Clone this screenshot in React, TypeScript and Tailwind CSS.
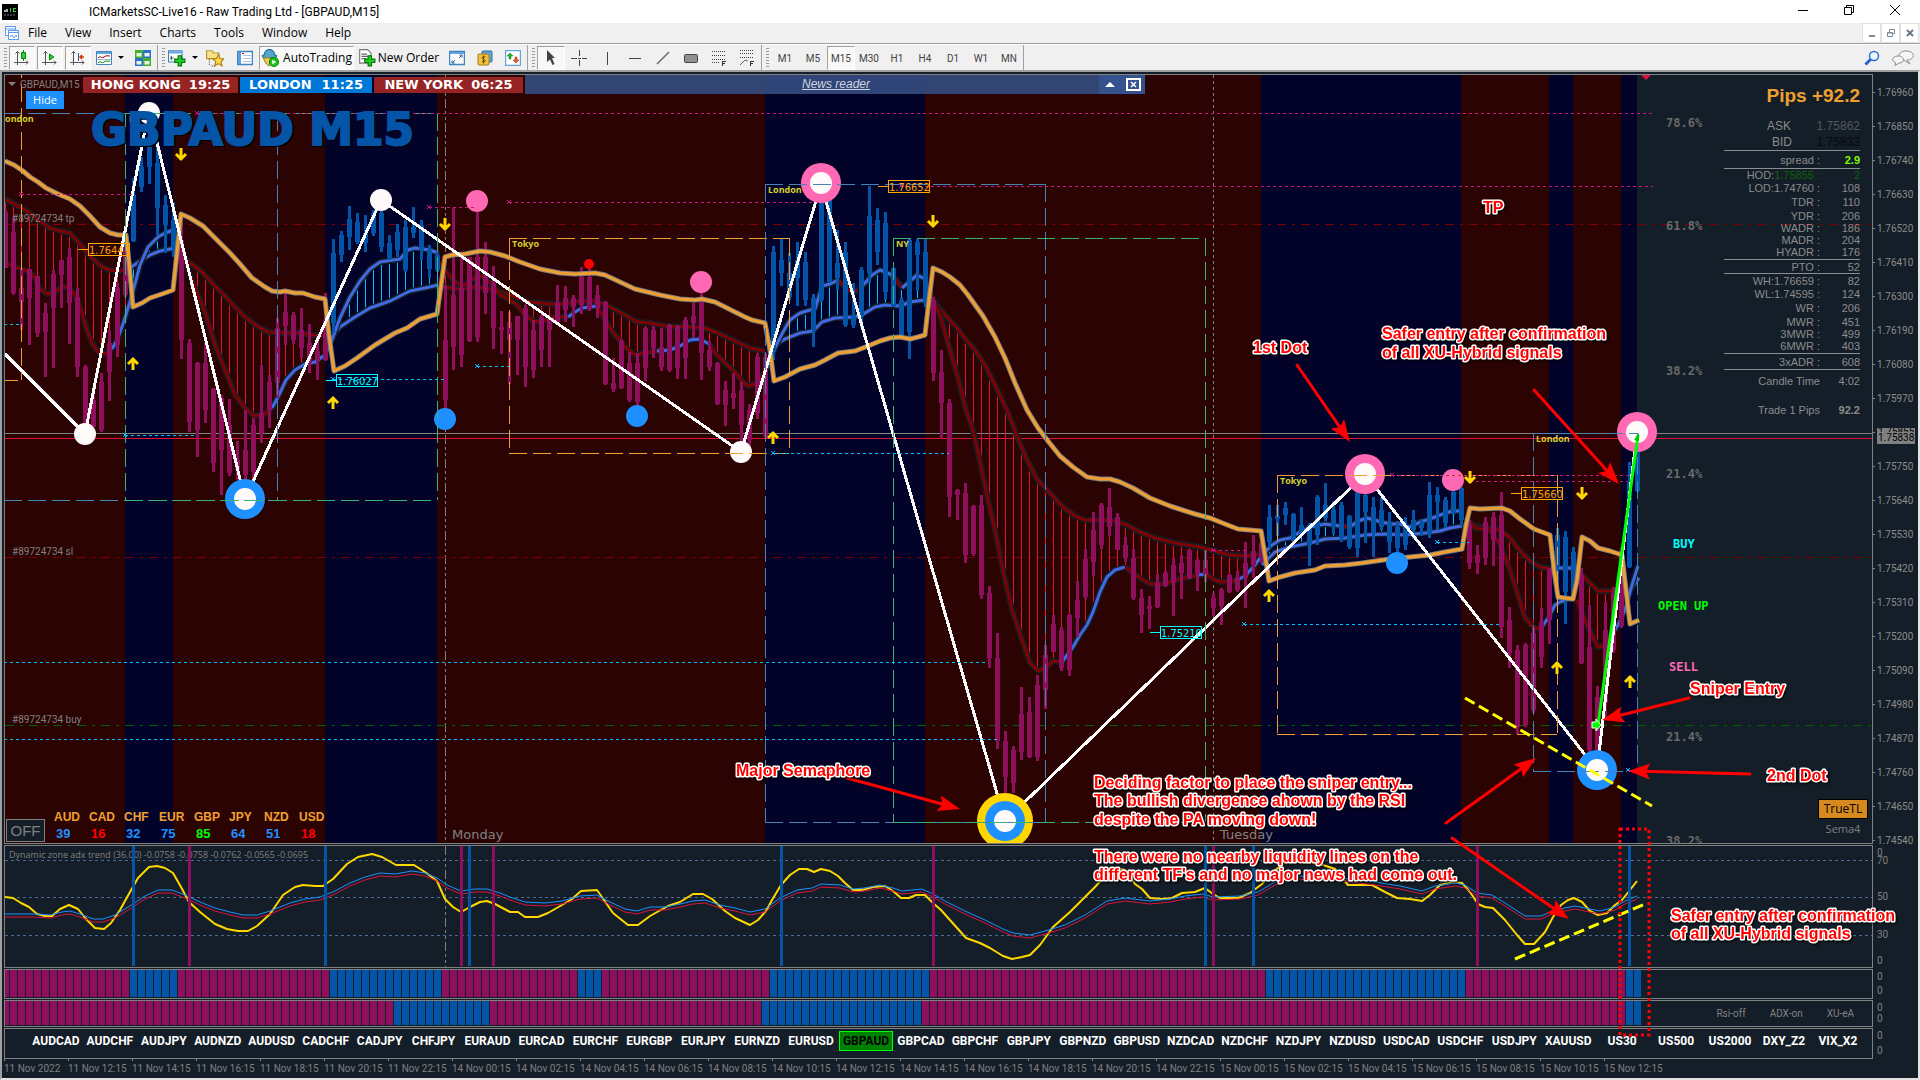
import type { ReactNode } from 'react';

type Candle = [high: number, low: number, top: number, bottom: number];
type Seg = { up: boolean; points: string };

// one entry per 15 minute bar: high, low, body top, body bottom
const candles: Candle[] = [
    [210, 268, 212, 268], [217, 295, 232, 293], [268, 330, 288, 302], [269, 345, 269, 298], [276, 337, 276, 333],
    [303, 377, 313, 332], [270, 368, 274, 308], [260, 308, 260, 275], [248, 344, 257, 303], [288, 377, 297, 367],
    [365, 425, 367, 425], [390, 427, 400, 427], [373, 432, 382, 430], [330, 401, 343, 372], [283, 357, 288, 345],
    [233, 297, 235, 295], [178, 242, 195, 241], [157, 192, 167, 187], [147, 184, 147, 167], [145, 235, 163, 208],
    [195, 253, 205, 225], [202, 257, 220, 248], [223, 359, 240, 340], [339, 432, 343, 422], [362, 457, 363, 430],
    [342, 423, 363, 410], [388, 472, 389, 463], [395, 495, 398, 450], [399, 476, 425, 473], [441, 480, 460, 470],
    [410, 490, 450, 475], [418, 483, 425, 472], [365, 443, 413, 433], [375, 428, 382, 410], [318, 398, 328, 383],
    [293, 345, 312, 326], [312, 344, 315, 340], [308, 358, 330, 348], [324, 373, 343, 363], [335, 380, 351, 360],
    [293, 361, 320, 360], [239, 333, 253, 323], [231, 262, 235, 255], [206, 250, 219, 237], [213, 244, 222, 242],
    [215, 252, 233, 243], [210, 236, 213, 233], [207, 252, 213, 247], [235, 260, 243, 258], [224, 257, 232, 250],
    [220, 272, 227, 270], [207, 238, 227, 233], [220, 260, 225, 250], [245, 278, 250, 269], [252, 272, 255, 270],
    [285, 410, 340, 400], [208, 370, 295, 347], [252, 367, 288, 355], [257, 342, 257, 341], [212, 342, 257, 337],
    [242, 314, 257, 293], [266, 349, 283, 328], [311, 354, 327, 330], [312, 384, 322, 340], [316, 375, 316, 340],
    [305, 387, 308, 367], [320, 378, 330, 370], [315, 367, 317, 350], [317, 367, 317, 330], [285, 323, 303, 322],
    [286, 322, 298, 310], [295, 327, 298, 307], [267, 314, 277, 305], [268, 311, 277, 309], [285, 318, 295, 308],
    [301, 385, 302, 384], [358, 392, 383, 389], [339, 389, 341, 388], [352, 402, 363, 400], [353, 406, 363, 402],
    [327, 381, 328, 368], [326, 358, 330, 348], [328, 371, 347, 367], [324, 372, 325, 370], [325, 379, 326, 368],
    [317, 379, 320, 358], [303, 338, 316, 323], [292, 380, 300, 353], [341, 371, 350, 367], [362, 405, 363, 404],
    [381, 426, 390, 405], [373, 409, 393, 398], [382, 442, 390, 425], [404, 447, 410, 440], [353, 419, 357, 413],
    [353, 438, 357, 436], [246, 360, 252, 352], [239, 286, 260, 273], [253, 300, 273, 297], [242, 306, 260, 278],
    [252, 306, 262, 300], [294, 347, 298, 330], [197, 302, 200, 300], [200, 283, 200, 282], [230, 290, 263, 278],
    [242, 327, 252, 325], [283, 328, 315, 325], [267, 328, 270, 317], [186, 283, 216, 273], [208, 265, 220, 252],
    [212, 300, 223, 292], [268, 307, 268, 306], [297, 337, 300, 335], [239, 359, 240, 332], [239, 291, 242, 255],
    [239, 307, 252, 303], [297, 381, 300, 373], [350, 438, 372, 403], [399, 517, 403, 497], [489, 520, 490, 495],
    [483, 563, 493, 555], [505, 556, 506, 554], [495, 599, 505, 595], [586, 668, 593, 658], [633, 749, 658, 741],
    [731, 793, 741, 777], [746, 793, 750, 783], [687, 760, 714, 752], [697, 758, 712, 757], [675, 761, 685, 757],
    [645, 709, 655, 690], [615, 652, 624, 652], [627, 671, 630, 668], [614, 676, 615, 670], [581, 637, 600, 618],
    [549, 599, 559, 597], [512, 576, 530, 562], [503, 549, 505, 545], [488, 536, 507, 527], [513, 550, 517, 550],
    [537, 562, 545, 558], [549, 600, 558, 598], [589, 633, 598, 615], [596, 629, 606, 609], [574, 608, 583, 607],
    [571, 587, 573, 586], [558, 616, 565, 583], [555, 599, 563, 573], [549, 579, 550, 578], [559, 591, 560, 573],
    [550, 582, 560, 575], [593, 616, 598, 608], [588, 625, 590, 606], [574, 593, 575, 592], [571, 592, 577, 590],
    [542, 608, 563, 578], [535, 578, 551, 565], [542, 563, 543, 558], [505, 548, 517, 542], [505, 536, 516, 519],
    [502, 525, 508, 515], [513, 543, 514, 541], [507, 535, 525, 534], [523, 566, 525, 545], [495, 545, 497, 535],
    [483, 521, 505, 518], [501, 534, 510, 527], [502, 542, 505, 538], [515, 549, 516, 547], [483, 557, 487, 548],
    [483, 543, 495, 512], [497, 557, 507, 533], [498, 530, 510, 527], [512, 553, 523, 542], [521, 559, 527, 548],
    [517, 550, 527, 545], [510, 539, 520, 530], [519, 536, 523, 528], [482, 538, 495, 533], [487, 530, 495, 502],
    [497, 528, 500, 523], [490, 515, 492, 512], [487, 526, 488, 520], [520, 569, 525, 563], [545, 574, 555, 563],
    [517, 565, 522, 558], [512, 566, 517, 540], [492, 638, 515, 627], [607, 668, 620, 653], [645, 734, 650, 727],
    [643, 727, 645, 725], [628, 713, 633, 710], [608, 668, 622, 657], [568, 644, 570, 620], [528, 600, 535, 567],
    [531, 624, 537, 592], [547, 600, 552, 597], [568, 664, 575, 663], [605, 753, 647, 750], [686, 753, 697, 750],
    [602, 720, 630, 703], [587, 653, 593, 650], [547, 628, 550, 626], [462, 568, 483, 567], [452, 492, 452, 491],
];

const inRanges = (i: number, ranges: number[][]) => ranges.some(([a, b]) => i >= a && i <= b);
const upBars = [[16, 21], [41, 54], [96, 115], [158, 182], [194, 196], [203, 204]];
const histOne = [[16, 21], [41, 54], [72, 74], [96, 115], [158, 182], [203, 204]];
const histTwo = [[49, 60], [95, 114], [203, 204]];
const bands = [[125, 173], [325, 437], [765, 925], [1261, 1461], [1549, 1573], [1621, 1637]];

const BLUE = '#0454a8';
const MAGENTA = '#8f0f5f';

const stopLine =
    '5,161 14,165 23,171 30,177 38,182 46,188 58,194 70,199 80,206 90,216 100,227 110,233 118,235 126,235 129,262 133,307 142,303 150,298 162,294 173,290 176,262 181,214 190,218 203,226 216,239 230,253 240,264 252,278 265,287 272,291 280,292 285,291 295,293 303,293 315,297 325,299 329,335 334,371 345,366 357,358 375,345 395,333 407,328 420,319 437,314 445,257 452,255 465,254 480,251 490,252 505,256 520,262 540,269 560,273 575,274 595,273 605,275 620,282 635,289 660,295 680,299 695,300 702,299 715,302 725,307 745,317 752,320 765,323 770,350 774,381 785,377 800,369 815,365 825,360 838,353 855,351 868,346 880,341 890,338 900,337 910,339 918,337 925,335 929,300 933,268 942,272 950,277 960,285 968,295 983,316 995,337 1005,358 1015,383 1027,410 1038,428 1048,441 1060,456 1073,467 1087,477 1100,479 1110,479 1120,482 1133,488 1150,498 1170,506 1195,514 1210,518 1225,524 1238,529 1261,531 1265,555 1269,581 1280,577 1295,573 1315,570 1325,566 1345,565 1362,563 1390,559 1410,557 1430,555 1445,552 1462,549 1466,525 1470,508 1480,509 1502,508 1510,511 1520,519 1534,529 1550,535 1554,570 1558,597 1565,598 1573,599 1577,580 1582,537 1590,541 1598,548 1610,551 1622,555 1626,590 1630,624 1639,620';

const slowMa: Seg[] = [
    { up: false, points: '5,199 20,207 30,213 38,220 50,228 60,231 70,233 80,244 92,258 102,267 110,270 120,271 129,269' },
    { up: true, points: '130,268 140,261 150,255 160,251 175,248' },
    { up: false, points: '179,251 190,263 202,272 213,284 225,296 235,307 245,317 257,326 268,332 285,333 300,333 320,336 327,334' },
    { up: true, points: '333,335 340,327 355,317 370,308 390,301 410,291 425,288 438,285' },
    { up: false, points: '440,287 460,289 475,287 490,289 500,292 515,297 530,302 550,304 565,304 580,301 595,301 610,307 625,315 637,322 650,323 665,326 690,327 705,328 720,334 735,341 750,348 765,351' },
    { up: true, points: '768,351 775,345 785,339 800,333 813,331 822,322 835,318 855,317 865,313 875,307 885,305 900,306 910,302 925,300' },
    { up: false, points: '931,300 935,303 945,315 957,328 967,341 975,350 985,365 995,385 1007,410 1017,436 1027,460 1037,479 1050,493 1063,507 1075,516 1085,520 1110,520 1125,524 1140,532 1155,538 1175,543 1200,547 1215,551 1230,555 1245,556 1260,555' },
    { up: true, points: '1262,565 1275,552 1290,547 1310,543 1325,539 1345,538 1365,535 1385,534 1405,535 1425,533 1440,531 1450,528 1462,526' },
    { up: false, points: '1466,522 1475,526 1490,528 1500,530 1510,538 1520,551 1530,561 1540,567 1552,569' },
    { up: true, points: '1556,568 1570,568 1577,570' },
    { up: false, points: '1579,572 1590,583 1598,591 1610,591 1620,590' },
    { up: true, points: '1624,592 1632,588 1639,578' },
];

const fastMa: Seg[] = [
    { up: false, points: '5,263 15,267 25,270 33,275 40,289 47,294 55,292 62,287 68,287 74,293 80,307 87,330 92,343 98,352 106,354 112,349' },
    { up: true, points: '112,349 118,338 125,318 132,295 140,265 148,247 158,237 165,233 176,229' },
    { up: false, points: '178,238 182,248 188,270 197,293 205,312 215,345 225,370 235,395 245,408 254,416 265,414 272,408' },
    { up: true, points: '272,408 279,395 286,380 295,370 305,364 315,362 325,355 332,340 340,318 350,297 360,281 370,269 380,262 400,259 408,250 415,248 430,250 438,253' },
    { up: false, points: '440,262 447,273 455,282 463,286 472,279 483,276 492,284 500,295 510,300 517,305 525,315 533,321 540,322 555,317 568,317' },
    { up: true, points: '568,317 575,312 582,308 597,306' },
    { up: false, points: '597,306 603,316 608,325 615,335 625,347 635,355 645,353 657,351' },
    { up: true, points: '657,351 670,350 680,346 690,340 700,339 709,344' },
    { up: false, points: '709,344 715,353 725,363 735,372 742,381 748,386 755,384 764,374' },
    { up: true, points: '766,370 775,348 783,332 790,320 800,313 810,310 815,309 822,286 830,284 838,280' },
    { up: false, points: '838,280 848,290 858,291' },
    { up: true, points: '860,288 865,283 872,275 880,270 890,274 895,278' },
    { up: false, points: '895,278 902,288' },
    { up: true, points: '902,288 910,281 917,275 925,279' },
    { up: false, points: '929,290 935,303 940,315 950,350 958,378 966,410 973,430 980,462 988,500 995,530 1003,571 1012,610 1022,640 1030,663 1038,671 1047,667 1053,661 1062,662' },
    { up: true, points: '1062,662 1073,647 1080,635 1087,625 1093,612 1100,592 1107,577 1115,570 1125,567' },
    { up: false, points: '1125,567 1133,573 1143,580 1150,584 1165,584 1175,580 1190,577 1198,575' },
    { up: true, points: '1198,575 1206,574' },
    { up: false, points: '1206,574 1213,579 1220,582 1235,581' },
    { up: true, points: '1235,581 1245,576 1255,565 1262,555 1272,545 1280,540 1290,538 1300,532 1310,527 1325,524 1340,526' },
    { up: false, points: '1340,526 1350,527' },
    { up: true, points: '1350,527 1358,521 1367,518 1378,521 1390,524 1400,524 1410,527 1420,522 1430,519 1440,515 1452,511 1462,511' },
    { up: false, points: '1466,517 1475,528 1490,530 1500,545 1510,570 1518,595 1525,618 1535,629 1542,627' },
    { up: true, points: '1542,627 1548,618 1555,605 1560,602 1573,598' },
    { up: false, points: '1577,600 1585,620 1592,635 1598,647 1605,645 1612,635' },
    { up: true, points: '1612,635 1618,625 1625,610 1632,585 1638,566' },
];

const adxYellow =
    '5,897 13,898 21,903 29,907 37,914 45,916 52,916 60,909 69,905 78,909 86,919 95,928 104,929 111,923 120,910 130,892 138,878 149,867 157,866 165,868 173,873 181,887 189,902 200,912 215,924 227,929 238,931 248,931 257,926 270,914 283,895 295,887 303,885 315,886 323,886 333,879 347,864 358,857 372,854 382,857 396,865 414,865 425,872 437,881 445,899 453,907 461,912 470,907 480,902 487,901 495,904 510,912 518,912 525,917 538,917 548,913 562,905 572,899 581,891 597,890 604,900 613,913 628,925 638,925 650,916 668,906 680,902 693,894 703,894 712,899 725,911 735,918 750,925 758,920 766,911 772,900 781,885 790,875 799,869 807,869 814,872 821,869 830,871 838,876 845,883 853,890 862,890 873,887 885,886 893,891 901,898 909,898 916,895 925,895 933,903 941,910 966,938 980,943 990,948 1003,956 1012,959 1022,957 1030,955 1040,945 1053,927 1070,912 1085,897 1095,887 1105,876 1115,868 1125,870 1135,884 1142,889 1150,898 1163,899 1172,898 1182,893 1195,892 1205,888 1213,894 1220,898 1238,898 1250,893 1262,884 1272,873 1284,863 1295,861 1305,862 1320,864 1335,869 1348,885 1372,885 1385,892 1397,898 1410,899 1422,901 1430,895 1440,885 1452,882 1462,883 1470,892 1478,904 1485,907 1493,908 1505,920 1517,935 1525,944 1534,944 1545,932 1553,917 1561,905 1568,900 1574,898 1582,902 1590,911 1598,915 1607,913 1615,905 1622,900 1630,890 1637,881';

const adxBlue =
    '5,914 35,914 50,915 62,912 70,911 80,914 93,919 103,919 115,915 133,904 145,896 158,890 172,890 185,895 200,902 215,908 230,912 243,915 257,915 270,911 290,903 305,899 320,897 335,891 350,883 365,877 380,873 395,874 412,871 425,873 437,878 447,885 461,891 475,889 487,889 500,893 510,897 525,902 545,903 562,901 580,896 597,895 610,902 625,909 637,911 650,907 665,907 680,904 693,901 705,900 720,905 735,908 750,912 765,909 780,898 797,890 812,888 821,884 840,885 853,889 865,888 880,885 893,888 902,891 922,889 933,894 945,901 965,911 985,920 1003,929 1013,933 1030,935 1045,931 1065,925 1085,915 1107,901 1125,898 1150,901 1170,899 1185,896 1203,894 1213,897 1240,896 1258,892 1275,882 1295,876 1330,877 1350,879 1375,882 1400,886 1422,891 1435,886 1455,883 1465,885 1477,893 1492,895 1505,903 1525,916 1541,916 1555,910 1575,906 1590,909 1600,911 1615,907 1625,901 1637,896';

const adxSignals: [number, boolean][] = [
    [16, true], [23, false], [40, true], [57, false], [58, true], [61, false], [97, true],
    [116, false], [150, true], [151, false], [156, true], [184, false], [203, true],
];

const toPoints = (segs: Seg[]) =>
    segs.flatMap(s => s.points.split(' ').map(p => p.split(',').map(Number)));

const valueAt = (pts: number[][], x: number) => {
    for (let i = 1; i < pts.length; i++) {
        const [x0, y0] = pts[i - 1];
        const [x1, y1] = pts[i];
        if (x <= x1) return x1 === x0 ? y1 : y0 + ((y1 - y0) * (x - x0)) / (x1 - x0);
    }
    return pts[pts.length - 1][1];
};

const slowPts = toPoints(slowMa);
const fastPts = toPoints(fastMa);
const barX = (i: number) => 5 + 8 * i;

const sessions = [
    { x: 4, y: 113, w: 273, h: 387, color: '#4682b4' },
    { x: 125, y: 113, w: 312, h: 387, color: '#3cb371' },
    { x: 0, y: 60, w: 21, h: 320, color: '#f0a030' },
    { x: 509, y: 238, w: 280, h: 215, color: '#f0a030' },
    { x: 765, y: 184, w: 280, h: 638, color: '#4682b4' },
    { x: 893, y: 238, w: 312, h: 584, color: '#3cb371' },
    { x: 1277, y: 475, w: 280, h: 259, color: '#f0a030' },
    { x: 1533, y: 433, w: 104, h: 338, color: '#4682b4' },
];

const sessionNames: [string, number, number][] = [
    ['London', 0, 122], ['N', 129, 122], ['Tokyo', 512, 247], ['London', 768, 193],
    ['NY', 896, 247], ['Tokyo', 1280, 484], ['London', 1536, 442],
];

const liquidity = [
    { x1: 197, x2: 1652, y: 113, up: true }, { x1: 21, x2: 132, y: 194, up: true }, { x1: 429, x2: 475, y: 207, up: true },
    { x1: 509, x2: 813, y: 202, up: true }, { x1: 901, x2: 1653, y: 186, up: true }, { x1: 1392, x2: 1630, y: 475, up: true },
    { x1: 1470, x2: 1628, y: 481, up: true }, { x1: 1213, x2: 1246, y: 550, up: true }, { x1: -8, x2: 20, y: 324, up: false },
    { x1: 125, x2: 194, y: 435, up: false }, { x1: 333, x2: 444, y: 379, up: false }, { x1: 477, x2: 509, y: 366, up: false },
    { x1: 773, x2: 949, y: 453, up: false }, { x1: 1437, x2: 1469, y: 542, up: false }, { x1: 1244, x2: 1501, y: 624, up: false },
    { x1: -8, x2: 987, y: 662, up: false }, { x1: -8, x2: 997, y: 739, up: false }, { x1: 1628, x2: 1634, y: 770, up: false },
];

const priceTags = [
    { x: 88, y: 243, text: '1.7644', color: '#ffa500' },
    { x: 888, y: 180, text: '1.76652', color: '#ffa500' },
    { x: 1521, y: 487, text: '1.75660', color: '#ffa500' },
    { x: 336, y: 374, text: '1.76027', color: '#00ffff' },
    { x: 1160, y: 626, text: '1.75210', color: '#00ffff' },
];

const signals: [number, number, boolean][] = [
    [181, 155, false], [133, 363, true], [333, 402, true], [445, 225, false], [773, 437, true], [933, 222, false],
    [1269, 595, true], [1470, 478, false], [1557, 667, true], [1582, 494, false], [1630, 681, true],
];

const dots: [number, number, string[]][] = [
    [85, 434, ['w']], [149, 113, ['w']], [381, 200, ['w']], [741, 452, ['w']],
    [245, 499, ['B', 'w']], [1597, 770, ['B', 'w']],
    [821, 183, ['P', 'w']], [1365, 474, ['P', 'w']], [1637, 432, ['P', 'w']],
    [477, 201, ['p']], [701, 282, ['p']], [1453, 480, ['p']],
    [445, 419, ['b']], [637, 416, ['b']], [1397, 563, ['b']],
    [1005, 821, ['Y', 'B', 'w']], [589, 264, ['r']],
];

const dotStyle: Record<string, [number, string]> = {
    w: [11, '#fffafa'], p: [11, '#ff69b4'], b: [11, '#1e90ff'], r: [5, '#ff0000'],
    P: [20, '#ff69b4'], B: [20, '#1e90ff'], Y: [28, '#ffd700'],
};

const levels: [string, number, number, string][] = [
    ['78.6%', 1666, 127, '#696969'], ['61.8%', 1666, 230, '#696969'], ['38.2%', 1666, 375, '#696969'],
    ['21.4%', 1666, 478, '#696969'], ['BUY', 1673, 548, '#00ffff'], ['OPEN UP', 1658, 610, '#00ff00'],
    ['SELL', 1669, 671, '#ff69b4'], ['21.4%', 1666, 741, '#696969'], ['38.2%', 1666, 845, '#696969'],
];

function MaLine({ segs }: { segs: Seg[] }) {
    return (
        <g fill="none" strokeLinejoin="round">
            {segs.map((s, i) => <polyline key={`h${i}`} points={s.points} stroke="#141e28" strokeWidth="6" />)}
            {segs.map((s, i) => <polyline key={i} points={s.points} stroke={s.up ? '#4169e1' : '#800000'} strokeWidth="3" />)}
        </g>
    );
}

function PriceChart() {
    return (
        <svg viewBox="5 75 1867 768" className="block w-full h-auto" role="img" aria-label="GBPAUD M15 chart">
            <rect x="5" y="75" width="1632" height="768" fill="#2b0303" />
            {bands.map(([a, b]) => <rect key={a} x={a} y="75" width={b - a} height="768" fill="#030329" />)}

            <g shapeRendering="crispEdges" strokeWidth="1">
                <g stroke="#808080">
                    <line x1="445.5" x2="445.5" y1="75" y2="843" strokeDasharray="9 3 3 3 3 3" />
                    <line x1="1213.5" x2="1213.5" y1="75" y2="843" strokeDasharray="3 3" />
                </g>
                <g stroke="#800000" strokeDasharray="9 6 3 6">
                    <line x1="5" x2="1873" y1="224.5" y2="224.5" />
                    <line x1="5" x2="1873" y1="557.5" y2="557.5" />
                </g>
                <line x1="5" x2="1873" y1="725.5" y2="725.5" stroke="#006400" strokeDasharray="9 6 3 6" />
                <line x1="5" x2="1873" y1="433.5" y2="433.5" stroke="#808080" />
                <line x1="5" x2="1873" y1="438.5" y2="438.5" stroke="#dc143c" />
            </g>

            <g shapeRendering="crispEdges">
                {candles.map((_, i) => {
                    const a = valueAt(slowPts, barX(i));
                    const b = valueAt(fastPts, barX(i));
                    if (Math.abs(a - b) < 8) return null;
                    return (
                        <rect key={i} x={barX(i)} y={Math.min(a, b) + 3} width="1" height={Math.abs(a - b) - 5}
                            fill={inRanges(i, upBars) ? '#00bfff' : '#dc143c'} />
                    );
                })}
            </g>
            <MaLine segs={slowMa} />
            <MaLine segs={fastMa} />

            <g shapeRendering="crispEdges">
                {candles.map(([high, low, top, bottom], i) => (
                    <g key={i} fill={inRanges(i, upBars) ? BLUE : MAGENTA}>
                        <rect x={barX(i) - 1} y={high} width="3" height={low - high} />
                        <rect x={barX(i) - 2} y={top} width="5" height={bottom - top} />
                    </g>
                ))}
            </g>

            <g fill="none" strokeLinejoin="round">
                <polyline points={stopLine} stroke="#808080" strokeWidth="5" />
                <polyline points={stopLine} stroke="#f0a030" strokeWidth="3" />
            </g>

            <polyline fill="none" stroke="#fff" strokeWidth="3" shapeRendering="crispEdges"
                points="5,354 85,434 149,110 245,499 381,200 741,452 821,184 1005,821 1365,474 1597,770 1637,432" />
            {dots.map(([x, y, rings]) => rings.map(r => (
                <circle key={`${x}${r}`} cx={x} cy={y} r={dotStyle[r][0]} fill={dotStyle[r][1]} />
            )))}

            <g fill="none" shapeRendering="crispEdges" strokeDasharray="18 6">
                {sessions.map(s => (
                    <g key={s.x} stroke={s.color}>
                        <path d={`M${s.x} ${s.y + 0.5}h${s.w}M${s.x} ${s.y + s.h + 0.5}h${s.w}`} />
                        <path d={`M${s.x + 0.5} ${s.y}v${s.h}M${s.x + s.w + 0.5} ${s.y}v${s.h}`} />
                    </g>
                ))}
            </g>
            <g fontFamily="Open Sans, sans-serif" fontSize="9" fontWeight="bold" fill="#d4d02c">
                {sessionNames.map(([name, x, y]) => <text key={x} x={x} y={y}>{name}</text>)}
            </g>

            {liquidity.map(l => (
                <g key={`${l.x1}-${l.y}`} stroke={l.up ? '#c71585' : '#00bfff'} fill="none">
                    <line x1={l.x1} x2={l.x2} y1={l.y + 0.5} y2={l.y + 0.5} strokeDasharray="3 3" shapeRendering="crispEdges" />
                    <path d={`M${l.x1 - 2} ${l.y - 2}l4 4m0 -4l-4 4`} />
                </g>
            ))}

            <g fontFamily="DejaVu Sans Condensed, sans-serif" fontSize="11">
                {priceTags.map(t => (
                    <g key={t.text}>
                        <path d={`M${t.x - 10} ${t.y + 6.5}h10`} stroke={t.color} />
                        <rect x={t.x + 0.5} y={t.y + 0.5} width="41" height="12" fill="none" stroke={t.color} />
                        <text x={t.x + 1} y={t.y + 11} fill={t.color}>{t.text}</text>
                    </g>
                ))}
            </g>

            {signals.map(([x, y, up]) => (
                <path key={x} fill="none" stroke="#ffd700" strokeWidth="3"
                    d={up ? `M${x} ${y + 7}v-12m-5 6l5 -5l5 5` : `M${x} ${y - 7}v12m-5 -6l5 5l5 -5`} />
            ))}

            <line x1="1598" y1="725" x2="1638" y2="435" stroke="#00ff00" strokeWidth="3" />
            <path d="M1592 722h4v-3l5 6l-5 6v-3h-4z" fill="#00ff00" stroke="#fff" />
            <path d="M1634 440l5 -7v8z" fill="#00c800" />
            <path d="M1641 75h10l-5 5z" fill="#dc143c" />

            <g fontFamily="DejaVu Sans Mono, monospace" fontSize="12" fontWeight="bold">
                {levels.map(([text, x, y, fill]) => <text key={y} x={x} y={y} fill={fill}>{text}</text>)}
            </g>
            <g fontFamily="Roboto, sans-serif" fontSize="10" fill="#808080">
                <text x="12" y="222">#89724734 tp</text>
                <text x="12" y="555">#89724734 sl</text>
                <text x="12" y="723">#89724734 buy</text>
            </g>
            <g fontFamily="DejaVu Sans, sans-serif" fontSize="13" fill="#808080">
                <text x="452" y="839">Monday</text>
                <text x="1220" y="839">Tuesday</text>
            </g>
            <g fontFamily="DejaVu Sans, sans-serif" fontSize="44" fontWeight="bold" strokeWidth="2">
                <text x="92" y="146" fill="#000" stroke="#000">GBPAUD M15</text>
                <text x="91" y="145" fill="#0454a8" stroke="#0454a8">GBPAUD M15</text>
            </g>
        </svg>
    );
}

function AdxPanel() {
    return (
        <svg viewBox="5 846 1867 121" className="block w-full h-auto" role="img" aria-label="Dynamic zone adx trend">
            <g shapeRendering="crispEdges" stroke="#4a6a90" strokeDasharray="3 3">
                <line x1="5" x2="1873" y1="860.5" y2="860.5" />
                <line x1="5" x2="1873" y1="897.5" y2="897.5" />
                <line x1="5" x2="1873" y1="935.5" y2="935.5" />
            </g>
            <line x1="445.5" x2="445.5" y1="846" y2="967" stroke="#808080" strokeDasharray="9 3 3 3 3 3" />
            <text x="9" y="858" fontFamily="Open Sans, sans-serif" fontSize="9" fill="#808080">
                Dynamic zone adx trend (36.00) -0.0758 -0.0758 -0.0762 -0.0565 -0.0695
            </text>
            <g fill="none" strokeLinejoin="round">
                <polyline points={adxYellow} stroke="#ffd700" strokeWidth="2" />
                <polyline points={adxBlue} stroke="#dc143c" transform="translate(0 3)" />
                <polyline points={adxBlue} stroke="#1e90ff" />
            </g>
            {adxSignals.map(([i, up]) => (
                <rect key={i} x={barX(i) - 1} y="846" width="3" height="120" fill={up ? BLUE : MAGENTA} />
            ))}
        </svg>
    );
}

function Histogram({ top, height, ranges }: { top: number; height: number; ranges: number[][] }) {
    return (
        <svg viewBox={`5 ${top} 1867 ${height}`} className="block w-full h-auto" role="img" aria-label="Trend histogram">
            {candles.map((_, i) => (
                <rect key={i} x={barX(i) - 3} y={top} width="7" height={height - 1} fill={inRanges(i, ranges) ? BLUE : MAGENTA} />
            ))}
        </svg>
    );
}

const stats: { label: string; value: string; row: string; mid?: string }[] = [
    { label: 'spread :', value: '2.9', row: 'h-[18px] border-t border-[#8a8f94]' },
    { label: 'HOD:', mid: '1.75855 :', value: '2', row: 'h-[13px] border-t border-[#8a8f94]' },
    { label: 'LOD:1.74760 :', value: '108', row: 'h-3' },
    { label: 'TDR :', value: '110', row: 'h-4' },
    { label: 'YDR :', value: '206', row: 'h-3' },
    { label: 'WADR :', value: '186', row: 'h-3' },
    { label: 'MADR :', value: '204', row: 'h-3' },
    { label: 'HYADR :', value: '176', row: 'h-[14px]' },
    { label: 'PTO :', value: '52', row: 'h-[14px] border-t border-[#8a8f94]' },
    { label: 'WH:1.76659 :', value: '82', row: 'h-[14px] border-t border-[#8a8f94]' },
    { label: 'WL:1.74595 :', value: '124', row: 'h-3' },
    { label: 'WR :', value: '206', row: 'h-4' },
    { label: 'MWR :', value: '451', row: 'h-3' },
    { label: '3MWR :', value: '499', row: 'h-3' },
    { label: '6MWR :', value: '403', row: 'h-[14px]' },
    { label: '3xADR :', value: '608', row: 'h-4 border-t border-[#8a8f94]' },
    { label: 'Candle Time', value: '4:02', row: 'h-[22px] border-t border-[#8a8f94]' },
    { label: 'Trade 1 Pips', value: '92.2', row: 'h-9' },
];

function StatsPanel() {
    return (
        <div className="absolute top-[7px] right-3 flex flex-col items-end font-['Liberation_Sans',sans-serif] text-[#8c8c8c]">
            <p className="text-[19px] leading-7 font-bold text-[#f0a030]">Pips +92.2</p>
            <div className="mt-2 w-34">
                <div className="flex h-4 justify-between pl-[43px] text-xs leading-4">
                    <span>ASK</span><span className="text-[#55595e]">1.75862</span>
                </div>
                <div className="flex h-4 justify-between pl-12 text-xs leading-4">
                    <span>BID</span><span className="text-[#05080b]">1.75833</span>
                </div>
                <table className="w-full border-collapse text-[11px] leading-3">
                    <tbody>
                        {stats.map(s => (
                            <tr key={s.label} className={s.row}>
                                <th scope="row" className="p-0 pr-1 text-right align-middle font-normal">
                                    {s.label}{s.mid && <span className="text-[#0a640a]">{s.mid}</span>}
                                </th>
                                <td className={`w-9 p-0 text-right align-middle ${s.label === 'spread :' ? 'font-bold text-[#7cfc00]' : s.mid ? 'text-[#0a640a]' : ''} ${s.value === '92.2' ? 'font-bold' : ''}`}>
                                    {s.value}
                                </td>
                            </tr>
                        ))}
                    </tbody>
                </table>
            </div>
        </div>
    );
}

const strength = [
    ['AUD', '39', 'text-[#1e90ff]'], ['CAD', '16', 'text-[#ff0000]'], ['CHF', '32', 'text-[#1e90ff]'], ['EUR', '75', 'text-[#1e90ff]'],
    ['GBP', '85', 'text-[#00ff00]'], ['JPY', '64', 'text-[#1e90ff]'], ['NZD', '51', 'text-[#1e90ff]'], ['USD', '18', 'text-[#ff0000]'],
];

function ChartOverlays() {
    return (
        <>
            <div className="absolute top-0 left-0 flex h-[19px] items-center font-['DejaVu_Sans',sans-serif] text-[13px] font-bold text-white">
                <div className="flex w-[78px] items-center gap-1 pl-[3px] font-['Roboto',sans-serif] text-[10px] font-normal text-[#808080]">
                    <svg viewBox="0 0 8 5" className="w-2 shrink-0" fill="#808080"><path d="M0 0h8l-4 4z" /></svg>
                    GBPAUD,M15
                </div>
                <div className="mr-0.5 flex h-4 w-[155px] items-center justify-center gap-2 bg-[#962424]"><span>HONG KONG</span><span>19:25</span></div>
                <div className="mr-0.5 flex h-4 w-[132px] items-center justify-center gap-2.5 bg-[#0078d7]"><span>LONDON</span><span>11:25</span></div>
                <div className="mr-0.5 flex h-4 w-[149px] items-center justify-center gap-2 bg-[#962424]"><span>NEW YORK</span><span>06:25</span></div>
                <div className="flex h-full w-[620px] items-stretch bg-[#344c80]/90">
                    <a href="#news" className="flex-1 pt-px text-center font-['Liberation_Sans',sans-serif] text-xs font-normal text-[#d0d4e0] italic underline">
                        <span className="ml-12">News reader</span>
                    </a>
                    <button aria-label="Collapse news" className="flex w-[22px] items-center justify-center bg-[#34528c]">
                        <svg viewBox="0 0 10 5" className="w-2.5" fill="#fff"><path d="M0 5l5 -5l5 5z" /></svg>
                    </button>
                    <button aria-label="Close news" className="flex w-6 items-center justify-center bg-[#34528c]">
                        <svg viewBox="0 0 15 13" className="w-[15px]" fill="none" stroke="#fff">
                            <path d="M1 1h13v11H1z" strokeWidth="2" /><path d="M5 4l5 5M10 4l-5 5" strokeWidth="1.5" />
                        </svg>
                    </button>
                </div>
            </div>
            <button className="absolute top-4 left-[21px] h-[18px] w-[38px] bg-[#1e90ff] font-['Open_Sans',sans-serif] text-[11px] leading-4 text-white">Hide</button>
            <StatsPanel />
            <div className="absolute bottom-0 left-0 flex items-end font-['Liberation_Sans',sans-serif]">
                <button className="m-px mr-[9px] h-[23px] w-[39px] border border-[#808080] bg-[#141e28] text-[15px] leading-5 text-[#808080]">OFF</button>
                {strength.map(([name, value, color]) => (
                    <div key={name} className="w-[35px] font-bold">
                        <p className="text-xs leading-4 text-[#f0a030]">{name}</p>
                        <p className={`pl-0.5 text-[13px] leading-[18px] ${color}`}>{value}</p>
                    </div>
                ))}
            </div>
            <div className="absolute right-1 bottom-1.5 flex flex-col items-center gap-0.5 font-['Open_Sans',sans-serif] text-[#808080]">
                <button className="h-5 w-[50px] border border-black bg-[#d68a1e] text-xs leading-4 text-black">TrueTL</button>
                <button className="text-[11px] leading-4">Sema4</button>
            </div>
        </>
    );
}

const prices = Array.from({ length: 23 }, (_, i) => ((176960 - i * 110) / 100000).toFixed(5));

function PriceAxis() {
    return (
        <div className="relative w-[45px] shrink-0 overflow-hidden font-['Roboto',sans-serif] text-[10px] text-[#8c8c8c]">
            <div className="absolute inset-x-0 top-px">
                {prices.map(p => (
                    <div key={p} className="flex h-[34px] items-center gap-0.5">
                        <span className="h-px w-0.5 bg-[#808080]" />
                        {p === '1.75860' ? (
                            <div className="mt-2 h-4 overflow-hidden bg-[#808080] px-px text-black">
                                <p className="h-1 overflow-hidden leading-2">1.75855</p>
                                <p className="leading-3">1.75838</p>
                            </div>
                        ) : <span>{p}</span>}
                    </div>
                ))}
            </div>
        </div>
    );
}

function Panel({ children, axis }: { children: ReactNode; axis?: ReactNode }) {
    return (
        <div className="flex">
            <div className="relative min-w-0 flex-1 overflow-hidden border border-[#808080]">{children}</div>
            {axis ?? (
                <div className="flex w-[45px] shrink-0 flex-col justify-between py-1 pl-1 font-['Roboto',sans-serif] text-[10px] leading-2 text-[#808080]">
                    <span>0</span><span>0</span>
                </div>
            )}
        </div>
    );
}

const symbols = [
    'AUDCAD', 'AUDCHF', 'AUDJPY', 'AUDNZD', 'AUDUSD', 'CADCHF', 'CADJPY', 'CHFJPY', 'EURAUD', 'EURCAD', 'EURCHF', 'EURGBP',
    'EURJPY', 'EURNZD', 'EURUSD', 'GBPAUD', 'GBPCAD', 'GBPCHF', 'GBPJPY', 'GBPNZD', 'GBPUSD', 'NZDCAD', 'NZDCHF', 'NZDJPY',
    'NZDUSD', 'USDCAD', 'USDCHF', 'USDJPY', 'XAUUSD', 'US30', 'US500', 'US2000', 'DXY_Z2', 'VIX_X2',
];

const times = [
    '11 Nov 2022', '11 Nov 12:15', '11 Nov 14:15', '11 Nov 16:15', '11 Nov 18:15', '11 Nov 20:15', '11 Nov 22:15',
    '14 Nov 00:15', '14 Nov 02:15', '14 Nov 04:15', '14 Nov 06:15', '14 Nov 08:15', '14 Nov 10:15', '14 Nov 12:15',
    '14 Nov 14:15', '14 Nov 16:15', '14 Nov 18:15', '14 Nov 20:15', '14 Nov 22:15', '15 Nov 00:15', '15 Nov 02:15',
    '15 Nov 04:15', '15 Nov 06:15', '15 Nov 08:15', '15 Nov 10:15', '15 Nov 12:15',
];

const notes: [string, number, number][] = [
    ['TP', 1483, 213], ['1st Dot', 1253, 353], ['Safer entry after confirmation', 1382, 339], ['of all XU-Hybrid signals', 1382, 358],
    ['Major Semaphore', 736, 776], ['Deciding factor to place the sniper entry...', 1094, 788],
    ['The bullish divergence ahown by the RSI', 1094, 806], ["despite the PA moving down!", 1094, 825],
    ['There were no nearby liquidity lines on the', 1094, 862], ["different TF's and no major news had come out.", 1094, 880],
    ['Sniper Entry', 1690, 694], ['2nd Dot', 1767, 781],
    ['Safer entry after confirmation', 1671, 921], ['of all XU-Hybrid signals', 1671, 939],
];

const arrows = [
    [1297, 365, 1350, 442], [1534, 390, 1619, 484], [847, 778, 960, 809], [1689, 698, 1602, 720],
    [1750, 774, 1628, 771], [1446, 823, 1536, 758], [1452, 838, 1569, 919],
];

function Annotations() {
    return (
        <svg viewBox="4 74 1914 1004" className="pointer-events-none absolute inset-x-0 top-0 w-full">
            <g stroke="#ffff00" strokeWidth="3" strokeDasharray="11 5">
                <line x1="1465" y1="698" x2="1652" y2="806" />
                <line x1="1515" y1="959" x2="1645" y2="904" />
            </g>
            <rect x="1620" y="829" width="29" height="206" fill="none" stroke="#ff0000" strokeWidth="3" strokeDasharray="3 3" />
            {arrows.map(([x1, y1, x2, y2]) => {
                const length = Math.hypot(x2 - x1, y2 - y1);
                const angle = (Math.atan2(y2 - y1, x2 - x1) * 180) / Math.PI;
                return (
                    <g key={x1} transform={`translate(${x1} ${y1}) rotate(${angle})`} fill="#ff0000">
                        <path d={`M0 0H${length - 14}`} stroke="#ff0000" strokeWidth="3" strokeLinecap="round" />
                        <path d={`M${length} 0l-22 -8l4 8l-4 8z`} />
                    </g>
                );
            })}
            <g fontFamily="Liberation Sans, sans-serif" fontSize="16" fontWeight="bold" fill="#ff0000"
                stroke="#fff" strokeWidth="3" strokeLinejoin="round" paintOrder="stroke" className="drop-shadow-[1px_1px_1px_#000]">
                {notes.map(([text, x, y]) => <text key={`${x}-${y}`} x={x} y={y}>{text}</text>)}
            </g>
        </svg>
    );
}

const Grip = () => <span className="mr-0.5 ml-1 h-5 w-[3px] bg-[repeating-linear-gradient(#999_0_1px,#f0f0f0_1px_3px)]" />;
const Divider = () => <span className="h-[25px] w-px bg-[#a0a0a0]" />;
const Caret = () => <svg viewBox="0 0 6 3" className="w-1.5" fill="#000"><path d="M0 0h6l-3 3z" /></svg>;

function Tool({ label, pressed, width = 'w-7', children }: { label: string; pressed?: boolean; width?: string; children: ReactNode }) {
    return (
        <button aria-label={label} className={`flex h-6 ${width} shrink-0 items-center justify-center gap-1.5 ${pressed ? 'border border-[#a0a0a0] border-r-white border-b-white bg-[#f8f8f8]' : ''}`}>
            {children}
        </button>
    );
}

function Icon({ children, size = 'w-4' }: { children: ReactNode; size?: string }) {
    return <svg viewBox="0 0 16 16" className={`${size} shrink-0`} fill="none">{children}</svg>;
}

const axes = <path d="M3.5 1v14M0 12.5h14M1.5 3.5l2 -2l2 2M12 10.5l2 2l-2 2" stroke="#555" />;

function Toolbar() {
    return (
        <div className="flex h-[26px] items-center border-t border-white bg-[#f0f0f0] font-['Open_Sans',sans-serif] text-xs text-black">
            <Grip />
            <div className="flex gap-0.5">
                <Tool label="Candlesticks" pressed width="w-[26px]"><Icon>{axes}<path d="M9.5 0v11" stroke="#080" /><path d="M7.5 2.5h4v6h-4z" fill="#2ecc40" stroke="#080" /></Icon></Tool>
                <Tool label="Auto scroll" pressed width="w-[26px]"><Icon>{axes}<path d="M7.5 4v6l4.5 -3z" fill="#2ecc40" stroke="#080" /></Icon></Tool>
                <Tool label="Chart shift" pressed width="w-[26px]"><Icon>{axes}<path d="M8.5 3v8" stroke="#1c5f8f" /><path d="M14 7H10M12 5L10 7l2 2" stroke="#d33a00" strokeWidth="1.5" /></Icon></Tool>
            </div>
            <Tool label="Indicators" width="w-[38px]">
                <Icon><path d="M.5 1.5h15v13H.5z" fill="#fff" stroke="#3f83c0" /><path d="M1 2h14v2H1z" fill="#5fa4df" /><path d="M2 8c3 -3 3 1 6 -1s3 -1 6 -1" stroke="#900" /><path d="M1 9.5h14" stroke="#9bc" /><path d="M2 13c3 -3 4 1 6 -1s3 0 6 -1" stroke="#080" /></Icon>
                <Caret />
            </Tool>
            <Tool label="Tile windows">
                <Icon><path d="M0 0h8v8H0z" fill="#46b02c" /><path d="M8 0h8v8H8z" fill="#2b6fd0" /><path d="M0 8h8v8H0z" fill="#2b6fd0" /><path d="M8 8h8v8H8z" fill="#46b02c" /><path d="M1.5 3h5v3.5h-5zM9.5 3h5v3.5h-5zM1.5 11h5v3.5h-5zM9.5 11h5v3.5h-5z" fill="#e8f4e8" /></Icon>
            </Tool>
            <Divider />
            <Grip />
            <Tool label="New chart" width="w-8">
                <Icon size="w-[18px]"><path d="M.5 1.5h12v10H.5z" fill="#fff" stroke="#3f83c0" /><path d="M1 2h11v2H1z" fill="#5fa4df" /><path d="M3 6v4M2 8h3" stroke="#555" /><path d="M9 6h3v3h3v3h-3v3H9v-3H6V9h3z" fill="#22d022" stroke="#087008" /></Icon>
                <Caret />
            </Tool>
            <Tool label="Profiles" width="w-8">
                <Icon size="w-[18px]"><path d="M.5 1.5h5l1 2h5v5H.5z" fill="#f7e08c" stroke="#b8952c" /><path d="M3 9v6M5 15h3" stroke="#444" strokeDasharray="1 1" /><path d="M11 5l1.500 3.500l3.500 .3l-2.700 2.400l.9 3.800l-3.200 -2l-3.200 2l.9 -3.800l-2.700 -2.400l3.500 -.3z" fill="#ffd94a" stroke="#a87c10" /></Icon>
            </Tool>
            <Tool label="Market watch">
                <Icon><path d="M.5 1.5h15v13H.5z" fill="#fff" stroke="#3f83c0" strokeWidth="1.5" /><path d="M1 2h3v12H1z" fill="#5f9fd8" /><path d="M6 5.5h8M6 8.5h8M6 11.5h8" stroke="#a9c6e8" /><path d="M5 3.5h2" stroke="#c00" /></Icon>
            </Tool>
            <Tool label="AutoTrading" pressed width="w-[95px]">
                <Icon size="w-[18px]"><path d="M3 5c0 -6 9 -6 9 0l2 1c0 3 -13 3 -13 0z" fill="#55a4cc" stroke="#2a6d92" /><path d="M2 8h11l-2 4l-4 3l-3 -3z" fill="#f0d060" stroke="#a88a20" /><circle cx="11.5" cy="11.5" r="4" fill="#1cc41c" stroke="#088008" /><path d="M10 9.5v4l3.500 -2z" fill="#fff" /></Icon>
                <span className="-ml-0.5">AutoTrading</span>
            </Tool>
            <Tool label="New Order" width="w-[89px]">
                <Icon size="w-[18px]"><path d="M1.5 .5h7l3 3v9h-10z" fill="#fff" stroke="#777" /><path d="M3 4.5h5M3 6.5h6M3 8.5h4" stroke="#666" /><path d="M9 6h3v3h3v3h-3v3H9v-3H6V9h3z" fill="#22d022" stroke="#087008" /></Icon>
                <span className="-ml-1 whitespace-nowrap">New Order</span>
            </Tool>
            <Tool label="Full screen"><Icon><path d="M.5 1.5h15v13H.5z" fill="#fff" stroke="#3f83c0" strokeWidth="1.5" /><path d="M1 2h14v2H1z" fill="#5fa4df" /><path d="M10 8l3 -3M10.5 5H13v2.500M6 10l-3 3M3 10.500V13h2.500" stroke="#1c5f9f" /></Icon></Tool>
            <Tool label="Terminal"><Icon><rect x="5" y="1" width="10" height="11" rx="1" fill="#5fa4df" stroke="#2b6fa0" /><rect x="1" y="4" width="11" height="11" rx="1" fill="#f0c040" stroke="#a87c10" /><path d="M8.5 7c-3 -1.500 -4.500 1.500 -2 2.300c3 .7 1.500 3.500 -1.500 2.200M6.500 5.500v8" stroke="#6b4a00" /></Icon></Tool>
            <Tool label="Strategy tester"><Icon><path d="M.5 .5h15v15H.5z" fill="#fff" stroke="#5fa4df" strokeWidth="1.5" /><path d="M5 3l3 3H6v3H4V6H2z" fill="#2db52d" stroke="#087008" strokeWidth=".5" /><path d="M11 13l3 -3h-2V7h-2v3H8z" fill="#f06030" stroke="#a02000" strokeWidth=".5" /></Icon></Tool>
            <Divider />
            <Grip />
            <Tool label="Cursor" pressed><Icon><path d="M4 0l8 8H9l2.500 6l-2 1L7 9.500L4 12z" fill="#444" /></Icon></Tool>
            <Tool label="Crosshair"><Icon><path d="M8.5 0v6M8.500 10v6M0 8.500h6M11 8.500h5M7 8.500h3" stroke="#444" /></Icon></Tool>
            <Tool label="Vertical line"><Icon><path d="M8.5 2v13" stroke="#444" /></Icon></Tool>
            <Tool label="Horizontal line"><Icon><path d="M2 8.5h12" stroke="#444" /></Icon></Tool>
            <Tool label="Trendline"><Icon><path d="M2 14L14 2" stroke="#666" strokeWidth="1.5" /></Icon></Tool>
            <Tool label="Rectangle"><Icon><rect x="1.5" y="4.5" width="13" height="8" rx="1" fill="#909090" stroke="#444" /></Icon></Tool>
            <Tool label="Fibonacci retracement"><Icon><path d="M1 1.5h14M1 5.500h14M1 9.500h14M1 12.500h8" stroke="#444" strokeDasharray="1 1" /><path d="M11.5 16v-5M11 11.500h4M11 13.500h3" stroke="#333" /></Icon></Tool>
            <Tool label="Fibonacci expansion"><Icon><path d="M1 0.5h14M1 3.500h14M1 7.500h14" stroke="#444" strokeDasharray="1 1" /><path d="M1 15l5 -5l3 1" stroke="#666" /><path d="M11.5 16v-5M11 11.500h4M11 13.500h3" stroke="#333" /></Icon></Tool>
            <Divider />
            <Grip />
            <div className="flex font-['Roboto',sans-serif] text-[#444]">
                {['M1', 'M5', 'M15', 'M30', 'H1', 'H4', 'D1', 'W1', 'MN'].map(t => (
                    <Tool key={t} label={t} pressed={t === 'M15'}><span className="pt-0.5 text-[10px]">{t}</span></Tool>
                ))}
            </div>
            <Divider />
            <div className="ml-auto flex items-center gap-3 pr-1.5">
                <button aria-label="Search"><Icon><circle cx="10" cy="6" r="4.5" fill="#eaf4ff" stroke="#2b6fd0" strokeWidth="1.5" /><path d="M1.5 14.5l5 -5" stroke="#2b5fd0" strokeWidth="3" /></Icon></button>
                <button aria-label="Community">
                    <svg viewBox="0 0 22 16" className="w-[22px]" fill="#f6f6f6" stroke="#8c8c8c"><path d="M14 1c10 0 9 9 1 9l3 4l-6 -4c-7 0 -7 -9 2 -9z" /><path d="M6 6c7 0 7 7 1 7l-4 2.500l.5 -3c-4 -1 -4 -6.500 2.500 -6.500z" /></svg>
                </button>
            </div>
        </div>
    );
}

export default function App() {
    return (
        <div className="flex min-h-screen flex-col overflow-hidden bg-[#f0f0f0]">
            <header className="flex h-[23px] items-center bg-white pl-0.5 text-xs text-black">
                <svg viewBox="0 0 16 16" className="w-4"><path d="M0 0h16v16H0z" fill="#000" /><path d="M2 6h2v2H2zM4 5h2v3H4z" fill="#aaa" /><path d="M8 4h1v4H8zM14 4h-3v4h3v-1h-2v-2h2z" fill="#2ecc40" /><path d="M2 11h12" stroke="#777" strokeDasharray="2 1" /></svg>
                <h1 className="ml-[71px] pt-px font-['Roboto',sans-serif] text-xs">ICMarketsSC-Live16 - Raw Trading Ltd - [GBPAUD,M15]</h1>
                <div className="ml-auto flex pr-0.5 pb-1">
                    <button aria-label="Minimize" className="flex w-[46px] justify-center"><svg viewBox="0 0 10 10" className="w-2.5" stroke="#000"><path d="M0 5.5h10" /></svg></button>
                    <button aria-label="Restore" className="flex w-[46px] justify-center"><svg viewBox="0 0 10 10" className="w-2.5" stroke="#000" fill="none"><path d="M.5 2.5h7v7h-7zM2.500 2.500v-2h7v7h-2" /></svg></button>
                    <button aria-label="Close" className="flex w-[46px] justify-center"><svg viewBox="0 0 10 10" className="w-2.5" stroke="#000"><path d="M0 0l10 10M10 0L0 10" /></svg></button>
                </div>
            </header>
            <nav className="flex h-[21px] items-center border-b border-[#a0a0a0] pl-[5px] font-['Open_Sans',sans-serif] text-xs text-black">
                <svg viewBox="0 0 14 14" className="mr-0.5 w-3.5" fill="#fff" stroke="#5b9bea"><path d="M.5 .5h10v9H.5zM.5 3h10" /><path d="M3.5 4.5h10v9h-10zM3.500 6.500h10" /><path d="M5 11l2 -2l2 3l2 -3l1 2" fill="none" /></svg>
                {['File', 'View', 'Insert', 'Charts', 'Tools', 'Window', 'Help'].map(m => (
                    <button key={m} className="px-[9px] first-of-type:pl-[7px]">{m}</button>
                ))}
                <div className="ml-auto flex gap-0.5 pr-0.5">
                    <button aria-label="Minimize chart" className="flex h-[18px] w-[17px] items-center justify-center bg-white outline outline-[#e0e0e0]"><svg viewBox="0 0 8 8" className="w-2" stroke="#7a8a99" strokeWidth="2"><path d="M1 7h6" /></svg></button>
                    <button aria-label="Restore chart" className="flex h-[18px] w-[17px] items-center justify-center bg-white outline outline-[#e0e0e0]"><svg viewBox="0 0 8 8" className="w-2" stroke="#7a8a99" fill="none"><path d="M.5 3.5h5v4h-5zM.5 4h5M2.500 3V.5h5v4h-2" /></svg></button>
                    <button aria-label="Close chart" className="flex h-[18px] w-[17px] items-center justify-center bg-white outline outline-[#e0e0e0]"><svg viewBox="0 0 8 8" className="w-2" stroke="#6a7a89" strokeWidth="2"><path d="M1 1l6 6M7 1L1 7" /></svg></button>
                </div>
            </nav>
            <Toolbar />

            <main className="flex-1 border-2 border-[#a0a0a0] border-r-[#e3e3e3] border-b-[#e3e3e3] bg-[#141e28] pt-0.5 pl-0.5">
                <div className="relative flex flex-col gap-px">
                    <Panel axis={<PriceAxis />}>
                        <PriceChart />
                        <ChartOverlays />
                    </Panel>
                    <Panel
                        axis={
                            <div className="flex w-[45px] shrink-0 flex-col pt-1 pl-1 font-['Roboto',sans-serif] text-[10px] leading-2 text-[#808080]">
                                <span>0</span><span>70</span><span className="mt-7">50</span><span className="mt-[30px]">30</span><span className="mt-[18px]">0</span>
                            </div>
                        }
                    >
                        <AdxPanel />
                    </Panel>
                    <Panel><Histogram top={970} height={28} ranges={histOne} /></Panel>
                    <Panel>
                        <Histogram top={1001} height={25} ranges={histTwo} />
                        <div className="absolute inset-y-0 right-[18px] flex items-center gap-6 font-['Roboto',sans-serif] text-[10px] text-[#808080]">
                            <button>Rsi-off</button><button>ADX-on</button><button>XU-eA</button>
                        </div>
                    </Panel>
                    <Panel>
                        <div className="flex h-[29px] items-start pt-0.5 pr-[7px] pl-6 font-['Roboto',sans-serif] text-xs font-bold text-white">
                            {symbols.map(s => (
                                <button key={s} className={`mx-px h-5 flex-1 basis-0 text-center leading-4 ${s === 'GBPAUD' ? 'border border-[#00ff00] bg-[#008000] text-black' : ''}`}>{s}</button>
                            ))}
                        </div>
                    </Panel>
                    <Annotations />
                </div>
                <div className="-mt-px flex h-5 overflow-hidden font-['Roboto',sans-serif] text-[10px] text-[#808080]">
                    {times.map(t => (
                        <div key={t} className="w-16 shrink-0 whitespace-nowrap">
                            <span className="block h-[3px] w-px bg-[#808080]" />
                            <span className="block leading-4">{t}</span>
                        </div>
                    ))}
                </div>
            </main>
        </div>
    );
}
